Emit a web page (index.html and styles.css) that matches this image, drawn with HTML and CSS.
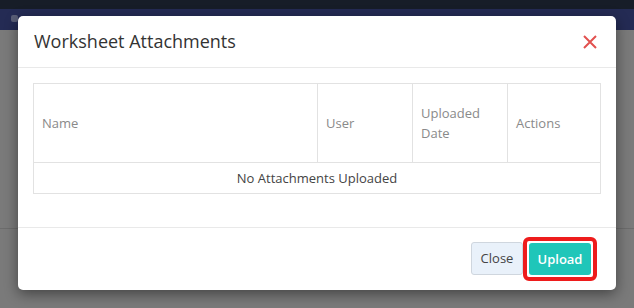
FILE: index.html
```html
<!DOCTYPE html>
<html lang="en">
<head>
    <meta charset="UTF-8">
    <meta name="viewport" content="width=device-width, initial-scale=1.0">
    <title>Worksheet Attachments</title>
    <link rel="stylesheet" href="styles.css">
</head>
<body>
    <div class="topbar"></div>
    <div class="navbar">
        <span class="nav-icon"></span>
    </div>
    <div class="page">
        <div class="page-line"></div>
    </div>

    <div class="modal">
        <div class="modal-header">
            <h4 class="modal-title">Worksheet Attachments</h4>
            <button class="close-x" aria-label="Close">
                <svg width="14" height="14" viewBox="0 0 14 14">
                    <path d="M1 1 L13 13 M13 1 L1 13" stroke="#e2514f" stroke-width="2" fill="none"/>
                </svg>
            </button>
        </div>
        <div class="modal-body">
            <table class="attachments">
                <thead>
                    <tr>
                        <th class="col-name">Name</th>
                        <th class="col-user">User</th>
                        <th class="col-date">Uploaded Date</th>
                        <th class="col-actions">Actions</th>
                    </tr>
                </thead>
                <tbody>
                    <tr>
                        <td colspan="4" class="empty">No Attachments Uploaded</td>
                    </tr>
                </tbody>
            </table>
        </div>
        <div class="modal-footer">
            <button class="btn btn-close">Close</button>
            <span class="highlight">
                <button class="btn btn-upload">Upload</button>
            </span>
        </div>
    </div>
</body>
</html>
```
FILE: styles.css
```css
body {
    margin: 0;
    font-family: "Open Sans", Arial, sans-serif;
    background-color: #7a7a7a;
    height: 308px;
    overflow: hidden;
}

.topbar {
    height: 9px;
    background-color: #171d28;
}

.navbar {
    height: 21px;
    background-color: #242b54;
    position: relative;
}

.nav-icon {
    position: absolute;
    left: 11px;
    top: 6px;
    width: 7px;
    height: 7px;
    background-color: #5a5f78;
    border-radius: 2px;
}

.page {
    height: 278px;
}

.page-line {
    height: 198px;
    border-bottom: 1px solid #6c6c6c;
}

.modal {
    position: absolute;
    left: 18px;
    top: 16px;
    width: 598px;
    height: 274px;
    background-color: #fff;
    border-radius: 5px;
    box-shadow: 0 4px 14px rgba(0, 0, 0, 0.45);
    display: flex;
    flex-direction: column;
}

.modal-header {
    height: 51px;
    flex-shrink: 0;
    border-bottom: 1px solid #e9e9e9;
    display: flex;
    align-items: center;
    justify-content: space-between;
    padding: 0 19px 0 16px;
}

.modal-title {
    margin: 0;
    font-size: 18px;
    font-weight: 400;
    color: #333;
    padding-bottom: 2px;
}

.close-x {
    background: none;
    border: none;
    padding: 0;
    width: 14px;
    height: 14px;
    cursor: pointer;
    display: block;
}

.modal-body {
    padding: 15px 15px 0 15px;
    height: 159px;
    flex-shrink: 0;
    box-sizing: border-box;
}

.attachments {
    width: 568px;
    border-collapse: collapse;
    font-size: 13px;
    line-height: 20px;
}

.attachments th,
.attachments td {
    border: 1px solid #e2e2e2;
}

.attachments th {
    text-align: left;
    font-weight: 400;
    color: #8a8a8a;
    padding: 19px 8px 19px 8px;
    height: 40px;
}

.col-name {
    width: 267px;
}

.col-user,
.col-date {
    width: 78px;
}

.attachments td.empty {
    text-align: center;
    color: #444;
    padding: 5px 8px;
}

.modal-footer {
    flex: 1;
    border-top: 1px solid #e9e9e9;
    display: flex;
    justify-content: flex-end;
    align-items: center;
    padding: 0 19px 0 0;
}

.btn {
    font-family: "Open Sans", Arial, sans-serif;
    font-size: 13px;
    border-radius: 3px;
    cursor: pointer;
}

.btn-close {
    background-color: #e9f1fa;
    border: 1px solid #cfd6de;
    color: #444;
    height: 33px;
    width: 52px;
    padding: 0;
    margin-bottom: 2px;
}

.highlight {
    display: block;
    border: 4px solid #ee1c1c;
    border-radius: 6px;
    padding: 2px;
}

.btn-upload {
    display: block;
    background-color: #1fc6b9;
    border: none;
    color: #fff;
    font-weight: 600;
    height: 32px;
    width: 62px;
    padding: 0;
}
```
